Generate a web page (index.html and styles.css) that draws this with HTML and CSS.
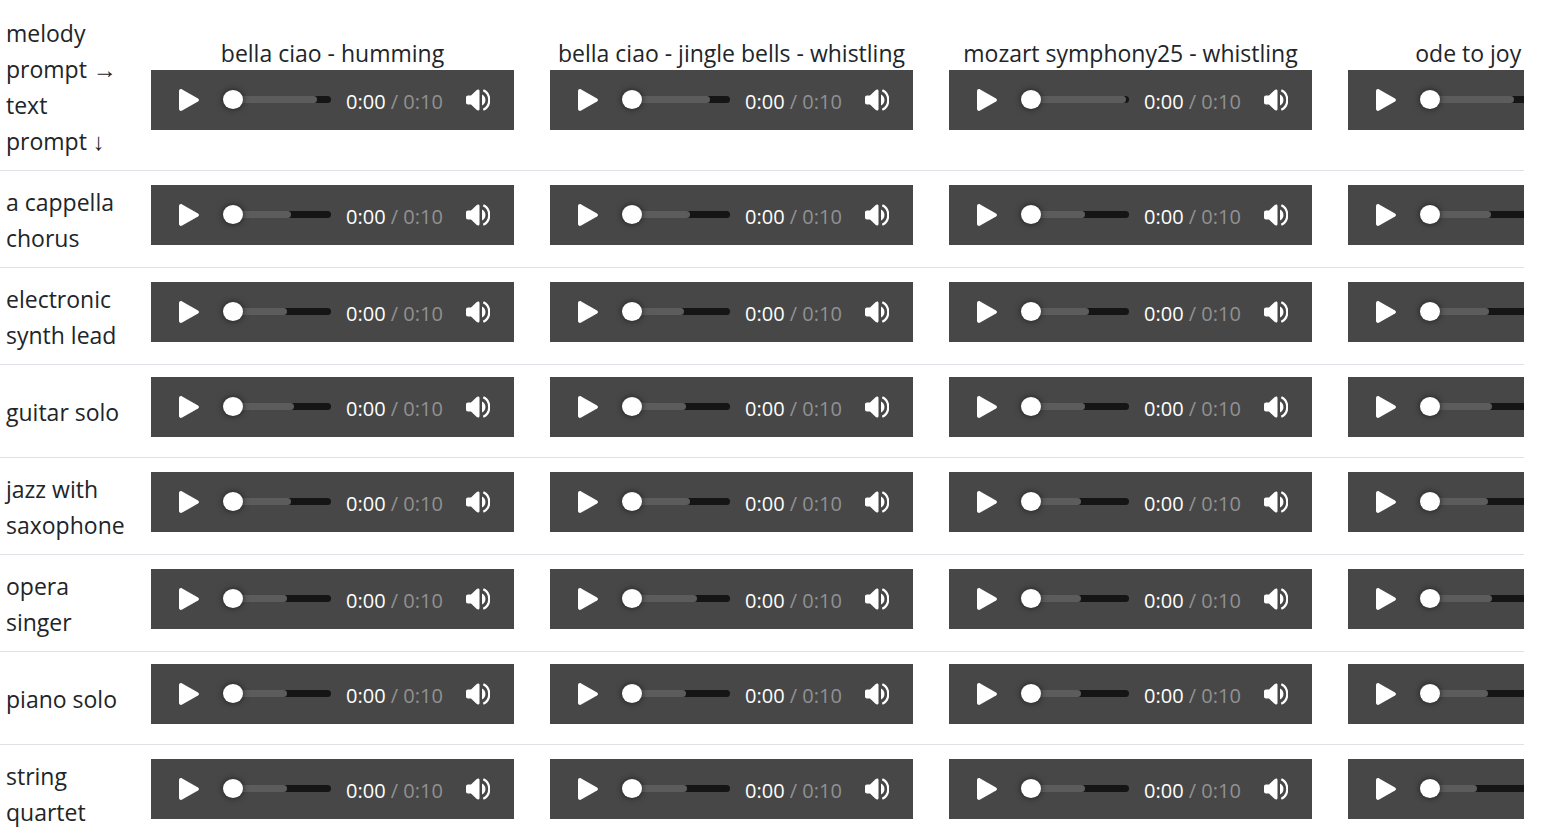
FILE: index.html
```
<!DOCTYPE html>
<html lang="en">
<head>
<meta charset="utf-8">
<title>Melody and text prompts</title>
<link rel="stylesheet" href="styles.css">
</head>
<body>
<svg class="sprite" aria-hidden="true">
  <symbol id="icon-play" viewBox="0 0 20 22"><path d="M0 2.2C0 .4 1.6-.5 3.2.4L19 9.4c1.3.8 1.3 2.4 0 3.2L3.2 21.6C1.6 22.500 0 21.600 0 19.800Z"/></symbol>
  <symbol id="icon-volume" viewBox="0 0 24 22"><path d="M2 6.500H5L10.500 1.200C12 0 13.500.4 13.500 2V20C13.500 21.600 12 22 10.500 20.800L5 15.500H2C.8 15.500 0 14.700 0 13.500V8.500C0 7.300.8 6.500 2 6.500Z"/><path d="M16 5.500C20.600 7.500 20.600 14.500 16 16.500Z"/><path d="M17.300 1.300C25.200 5 25.200 17 17.300 20.700" fill="none" stroke="currentColor" stroke-width="2.200"/></symbol>
</svg>
<main class="scroller">
  <table class="samples">
    <thead><tr id="melodies"><th class="label" scope="col">melody prompt <span class="arrow">→</span> text prompt <span class="arrow">↓</span></th></tr></thead>
    <tbody id="prompts"></tbody>
  </table>
</main>
<script src="script.js"></script>
</body>
</html>
```

FILE: styles.css
```
body {
  margin: 0;
  background: #fff;
  color: #212529;
  font-family: "Segoe UI", "Open Sans", "Noto Sans", sans-serif;
  font-size: 23px;
  line-height: 36px;
}

.sprite {
  display: none;
}

.scroller {
  height: 100vh;
  margin-right: 28px;
  padding-top: 2px;
  box-sizing: border-box;
  overflow: hidden;
}

.samples {
  border-collapse: separate;
  border-spacing: 0;
}

.samples th,
.samples td {
  padding: 12px 18px;
  border-bottom: 1px solid #dee2e6;
  font-weight: normal;
  text-align: center;
  vertical-align: middle;
  white-space: nowrap;
}

.samples th {
  padding: 13px 18px 11px;
}

.samples .label {
  width: 118px;
  min-width: 118px;
  max-width: 118px;
  padding: 13px 9px 11px 6px;
  text-align: left;
  white-space: normal;
}

.arrow {
  font-family: "Noto Sans", sans-serif;
  font-size: 24px;
  line-height: 18px;
}

.player {
  display: flex;
  align-items: center;
  box-sizing: border-box;
  width: 363px;
  height: 60px;
  margin-bottom: 8px;
  padding: 0 24px 0 28px;
  background: #474747;
  color: #fff;
}

th .player {
  margin: -1px 0 9px;
}

.player button {
  display: flex;
  padding: 0;
  border: 0;
  background: none;
  color: inherit;
}

.player svg {
  fill: currentColor;
}

.play-icon {
  width: 20px;
  height: 22px;
}

.volume-icon {
  width: 24px;
  height: 22px;
}

.timeline {
  display: grid;
  align-items: center;
  width: 108px;
  margin-left: 24px;
  padding-bottom: 1px;
}

.timeline > * {
  grid-area: 1 / 1;
}

.track {
  height: 7px;
  border-radius: 4px;
  background: #151515;
}

.buffered {
  display: block;
  height: 7px;
  border-radius: 4px;
  background: #5c5c5c;
}

.seek {
  appearance: none;
  width: 100%;
  height: 19px;
  margin: 0;
  background: none;
}

.seek::-webkit-slider-thumb {
  appearance: none;
  width: 20px;
  height: 19px;
  border: 0;
  border-radius: 50%;
  background: #fff;
  box-shadow: 0 0 6px rgba(0, 0, 0, 0.6);
}

.time {
  margin-left: 15px;
  padding-top: 3px;
  color: #919191;
  font-size: 20px;
}

.current {
  color: #fff;
}

.volume {
  margin-left: auto;
}
```

FILE: script.js
```
const melodies = [
  { name: "bella ciao - humming", loaded: 94 },
  { name: "bella ciao - jingle bells - whistling", loaded: 88 },
  { name: "mozart symphony25 - whistling", loaded: 105 },
  { name: "ode to joy - humming", loaded: 94 }
];

const prompts = [
  { name: "a cappella chorus", loaded: [68, 68, 64, 71] },
  { name: "electronic synth lead", loaded: [64, 62, 68, 69] },
  { name: "guitar solo", loaded: [71, 64, 64, 72] },
  { name: "jazz with saxophone", loaded: [68, 68, 60, 68] },
  { name: "opera singer", loaded: [64, 75, 60, 72] },
  { name: "piano solo", loaded: [64, 64, 60, 68] },
  { name: "string quartet", loaded: [64, 65, 64, 57] }
];

const TOTAL = 108;

const player = (loaded, name) => `
  <div class="player" role="group" aria-label="${name}">
    <button type="button" aria-label="Play"><svg class="play-icon"><use href="#icon-play"/></svg></button>
    <div class="timeline">
      <div class="track"><span class="buffered" style="width:${loaded / TOTAL * 100}%"></span></div>
      <input class="seek" type="range" min="0" max="10" value="0" aria-label="Seek">
    </div>
    <span class="time"><span class="current">0:00</span> / 0:10</span>
    <button class="volume" type="button" aria-label="Mute"><svg class="volume-icon"><use href="#icon-volume"/></svg></button>
  </div>`;

document.getElementById("melodies").insertAdjacentHTML("beforeend",
  melodies.map(m => `<th scope="col">${m.name}${player(m.loaded, m.name)}</th>`).join(""));

document.getElementById("prompts").innerHTML = prompts.map(p => `
  <tr><th class="label" scope="row">${p.name}</th>${
    p.loaded.map((n, i) => `<td>${player(n, p.name + ", " + melodies[i].name)}</td>`).join("")
  }</tr>`).join("");
```
